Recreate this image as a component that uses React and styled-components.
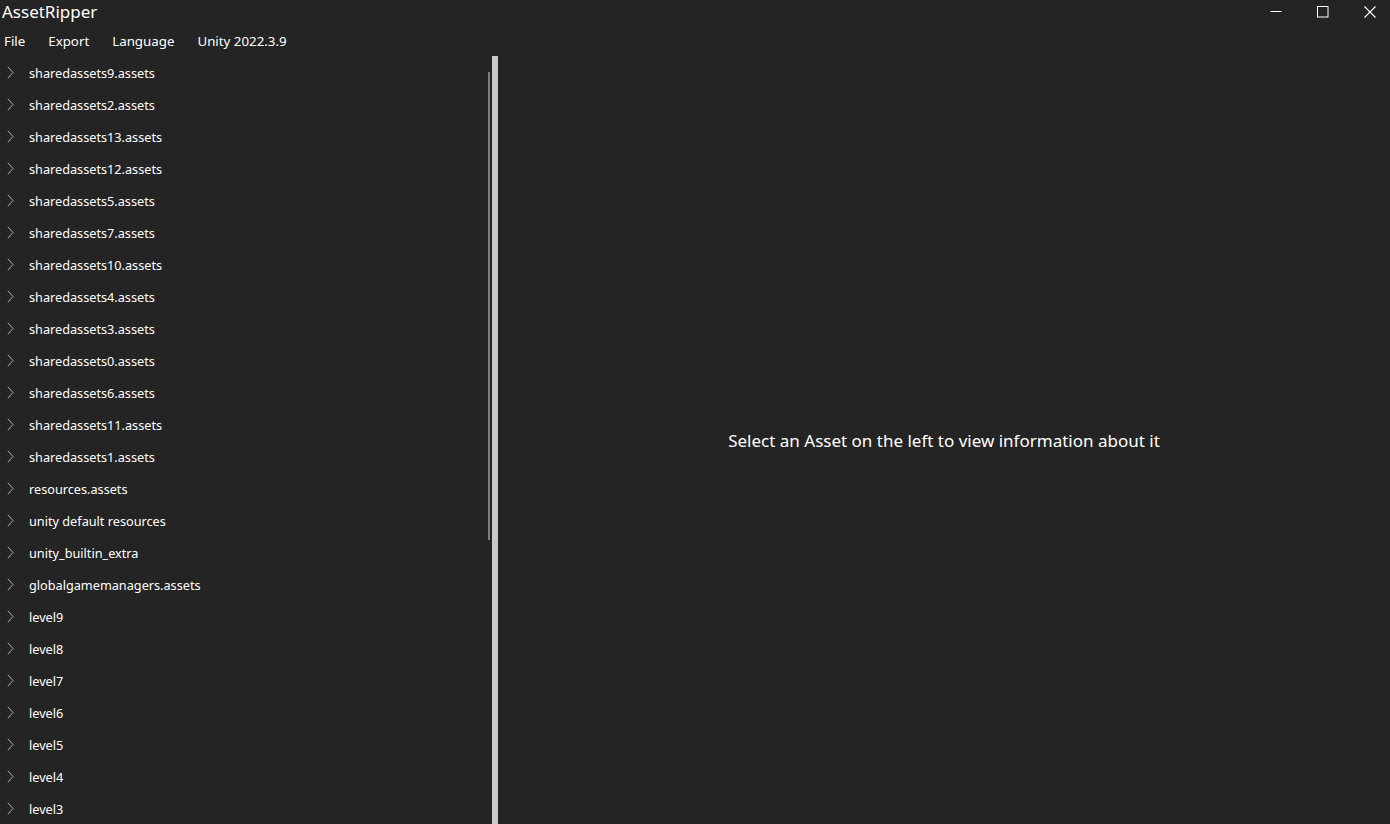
import React from 'react'
import styled, { createGlobalStyle } from 'styled-components'

const Global = createGlobalStyle`
    html, body {
        margin: 0;
        height: 100%;
        overflow: hidden;
        background: #242424;
    }
    body {
        font-family: "Noto Sans", "Open Sans", sans-serif;
        color: #ffffff;
    }
`;

const Window = styled.div`
    height: 100vh;
    display: flex;
    flex-direction: column;
    background: #242424;
`;

const TitleBar = styled.div`
    height: 24px;
    display: flex;
    align-items: center;
    justify-content: space-between;
`;

const Title = styled.div`
    font-size: 17px;
    padding-left: 2px;
    line-height: 24px;
`;

const Controls = styled.div`
    display: flex;
    align-self: stretch;
    margin-right: -3px;
`;

const ControlButton = styled.div`
    width: 47px;
    display: flex;
    align-items: center;
    justify-content: center;
`;

const MenuBar = styled.div`
    height: 32px;
    display: flex;
    align-items: center;
    padding: 2px 0 0 4px;
    box-sizing: border-box;
    gap: 23px;
    font-size: 13.3px;
`;

const MenuItem = styled.span`
    line-height: 30px;
`;

const Body = styled.div`
    flex: 1;
    display: flex;
    min-height: 0;
`;

const TreePane = styled.div`
    width: 492px;
    position: relative;
    overflow: hidden;
    padding-top: 1px;
    box-sizing: border-box;
`;

const Thumb = styled.div`
    position: absolute;
    right: 2px;
    top: 16px;
    width: 2px;
    height: 468px;
    background: #7c7c7c;
`;

const Splitter = styled.div`
    width: 6px;
    background: #c9c9c9;
`;

const Row = styled.div`
    height: 32px;
    display: flex;
    align-items: center;
    padding-left: 7px;
    font-size: 12.7px;
`;

const Chevron = styled.svg`
    width: 7px;
    height: 13px;
    margin-right: 15px;
    margin-top: -2px;
`;

const DetailPane = styled.div`
    flex: 1;
    display: flex;
    align-items: center;
    justify-content: center;
    font-size: 17px;
`;

const items = [
    'sharedassets9.assets', 'sharedassets2.assets', 'sharedassets13.assets', 'sharedassets12.assets',
    'sharedassets5.assets', 'sharedassets7.assets', 'sharedassets10.assets', 'sharedassets4.assets',
    'sharedassets3.assets', 'sharedassets0.assets', 'sharedassets6.assets', 'sharedassets11.assets',
    'sharedassets1.assets', 'resources.assets', 'unity default resources', 'unity_builtin_extra',
    'globalgamemanagers.assets', 'level9', 'level8', 'level7', 'level6', 'level5', 'level4', 'level3',
];

function App() {
    return (
        <>
            <Global />
            <Window>
                <TitleBar>
                    <Title>AssetRipper</Title>
                    <Controls>
                        <ControlButton>
                            <svg width="12" height="12" viewBox="0 0 12 12"><path d="M0.5 5.5h11" stroke="#fff" strokeWidth="1" /></svg>
                        </ControlButton>
                        <ControlButton>
                            <svg width="12" height="12" viewBox="0 0 12 12"><rect x="0.5" y="0.5" width="10.5" height="10.5" fill="none" stroke="#fff" strokeWidth="1" /></svg>
                        </ControlButton>
                        <ControlButton>
                            <svg width="12" height="12" viewBox="0 0 12 12"><path d="M0.5 0.5L11.5 11.5M11.5 0.5L0.5 11.5" stroke="#fff" strokeWidth="1.1" /></svg>
                        </ControlButton>
                    </Controls>
                </TitleBar>
                <MenuBar>
                    <MenuItem>File</MenuItem>
                    <MenuItem>Export</MenuItem>
                    <MenuItem>Language</MenuItem>
                    <MenuItem>Unity 2022.3.9</MenuItem>
                </MenuBar>
                <Body>
                    <TreePane>
                        {items.map(name => (
                            <Row key={name}>
                                <Chevron viewBox="0 0 7 13">
                                    <path d="M0.8 0.8L6 6.5L0.8 12.2" fill="none" stroke="#b0b0b0" strokeWidth="1" />
                                </Chevron>
                                {name}
                            </Row>
                        ))}
                        <Thumb />
                    </TreePane>
                    <Splitter />
                    <DetailPane>Select an Asset on the left to view information about it</DetailPane>
                </Body>
            </Window>
        </>
    )
}

export default App
